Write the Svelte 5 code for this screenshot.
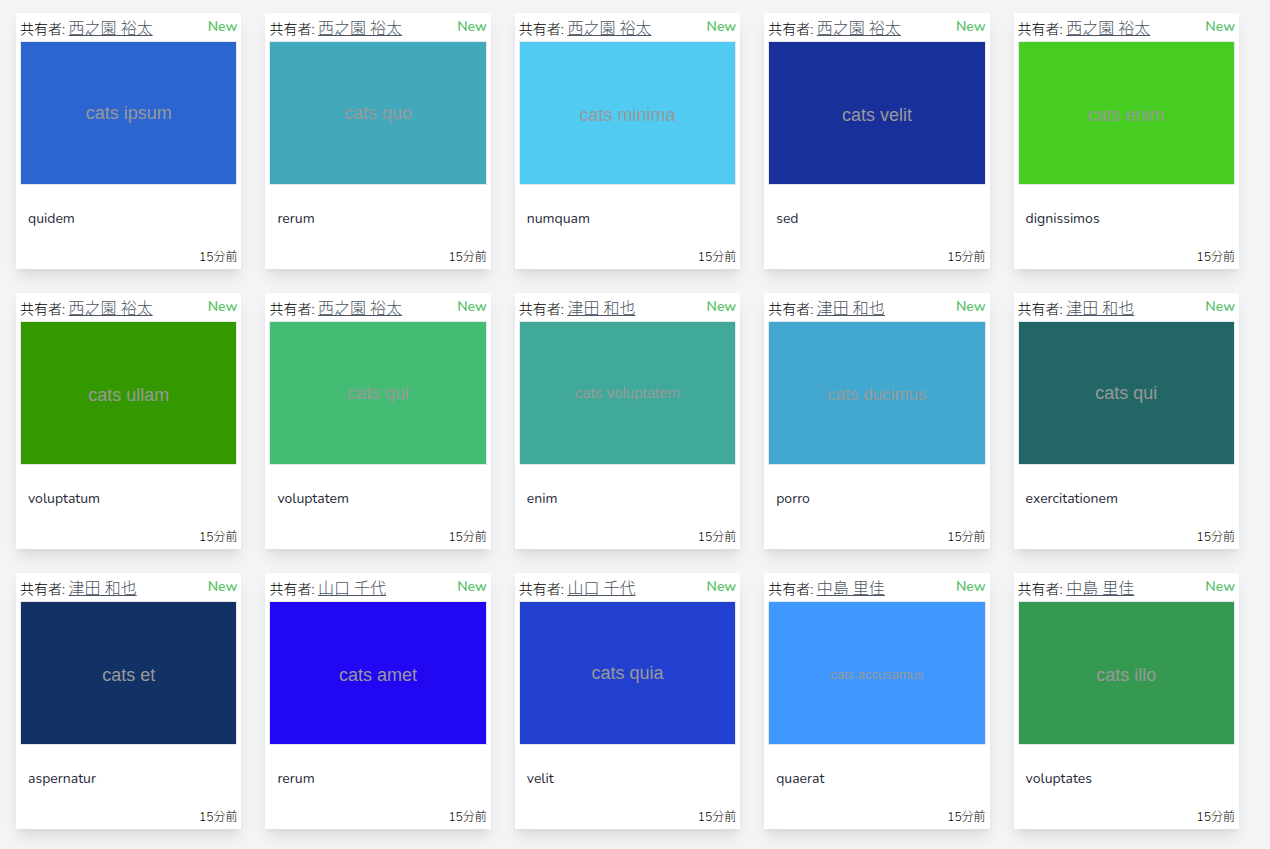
<script>
  const items = [
    ['西之園 裕太', 'ipsum', '#2c65cf', 'quidem'],
    ['西之園 裕太', 'quo', '#42a9bd', 'rerum'],
    ['西之園 裕太', 'minima', '#51cbf1', 'numquam'],
    ['西之園 裕太', 'velit', '#18309a', 'sed'],
    ['西之園 裕太', 'enim', '#47cd22', 'dignissimos'],
    ['西之園 裕太', 'ullam', '#349800', 'voluptatum'],
    ['西之園 裕太', 'qui', '#45bc74', 'voluptatem'],
    ['津田 和也', 'voluptatem', '#40a99a', 'enim', 15],
    ['津田 和也', 'ducimus', '#42a8d0', 'porro', 17],
    ['津田 和也', 'qui', '#226766', 'exercitationem'],
    ['津田 和也', 'et', '#123266', 'aspernatur'],
    ['山口 千代', 'amet', '#2207f2', 'rerum'],
    ['山口 千代', 'quia', '#2240cf', 'velit'],
    ['中島 里佳', 'accusamus', '#4098ff', 'quaerat', 13],
    ['中島 里佳', 'illo', '#369952', 'voluptates']
  ].map(([owner, word, color, title, size = 18]) => ({ owner, word, color, title, size }));
</script>

<ul class="grid">
  {#each items as item}
    <li class="card">
      <header>
        <p class="owner">共有者: <a href="#owner">{item.owner}</a></p>
        <span class="new">New</span>
      </header>
      <div class="thumb" class:low={!/[gjpqy]/.test(item.word)} style="background-color: {item.color}; font-size: {item.size}px">
        cats {item.word}
      </div>
      <h2>{item.title}</h2>
      <time>15分前</time>
    </li>
  {/each}
</ul>

<style>
  :global(body) {
    margin: 0;
    background: #f3f4f6;
    font-family: Nunito, "Noto Sans", "Noto Sans CJK JP", sans-serif;
  }
  .grid {
    display: grid;
    grid-template-columns: repeat(5, minmax(0, 1fr));
    gap: 24px;
    margin: 0;
    padding: 13px 31px 20px 16px;
    list-style: none;
  }
  .card {
    display: flex;
    flex-direction: column;
    padding: 4px;
    background: #fff;
    box-shadow: 0 10px 15px -3px rgba(0, 0, 0, 0.1), 0 4px 6px -2px rgba(0, 0, 0, 0.05);
  }
  header {
    display: flex;
    justify-content: space-between;
    height: 24px;
  }
  .owner {
    margin: 0;
    font-size: 14px;
    font-weight: 300;
    line-height: 24px;
    color: #000;
    white-space: nowrap;
  }
  .owner a {
    font-size: 16px;
    color: #4b5563;
    text-decoration: underline;
  }
  .new {
    font-size: 14px;
    font-weight: 600;
    line-height: 20px;
    color: #5bbf6c;
  }
  .thumb {
    box-sizing: border-box;
    display: flex;
    align-items: center;
    justify-content: center;
    height: 144px;
    border: 1px solid #e5e7eb;
    font-family: "Liberation Sans", Arial, sans-serif;
    line-height: 20px;
    color: #999;
  }
  .low {
    padding-top: 4px;
  }
  h2 {
    margin: 0;
    padding: 24px 8px 20px;
    font-size: 14px;
    font-weight: 400;
    line-height: 20px;
    color: #1f2937;
  }
  time {
    align-self: flex-end;
    font-size: 12px;
    font-weight: 300;
    line-height: 16px;
    color: #000;
  }
</style>
